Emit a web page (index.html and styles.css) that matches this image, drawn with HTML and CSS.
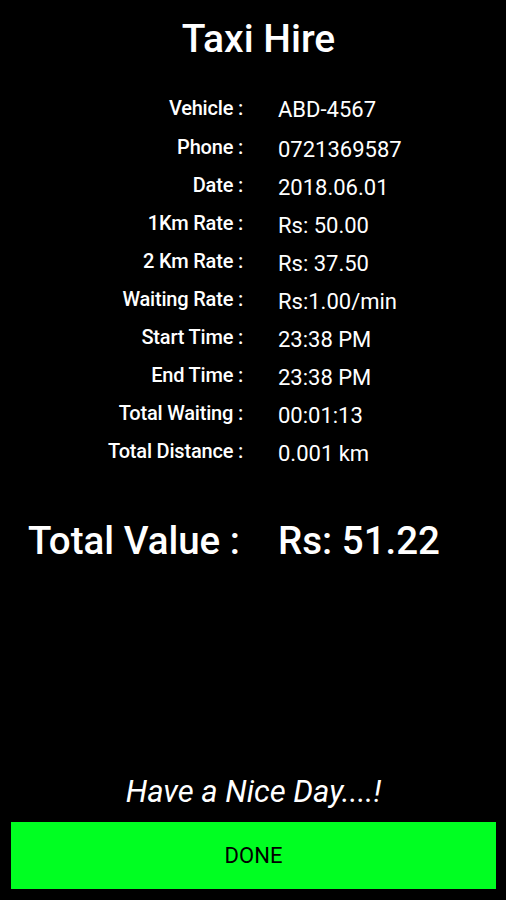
FILE: index.html
```html
<!DOCTYPE html>
<html lang="en">
<head>
<meta charset="UTF-8">
<title>Taxi Hire</title>
<link rel="stylesheet" href="styles.css">
</head>
<body>
<div class="screen">
    <h1 class="titulo">Taxi Hire</h1>

    <div class="detalles">
        <div class="fila"><span class="etiqueta">Vehicle :</span><span class="valor">ABD-4567</span></div>
        <div class="fila"><span class="etiqueta">Phone :</span><span class="valor">0721369587</span></div>
        <div class="fila"><span class="etiqueta">Date :</span><span class="valor">2018.06.01</span></div>
        <div class="fila"><span class="etiqueta">1Km Rate :</span><span class="valor">Rs: 50.00</span></div>
        <div class="fila"><span class="etiqueta">2 Km Rate :</span><span class="valor">Rs: 37.50</span></div>
        <div class="fila"><span class="etiqueta">Waiting Rate :</span><span class="valor">Rs:1.00/min</span></div>
        <div class="fila"><span class="etiqueta">Start Time :</span><span class="valor">23:38 PM</span></div>
        <div class="fila"><span class="etiqueta">End Time :</span><span class="valor">23:38 PM</span></div>
        <div class="fila"><span class="etiqueta">Total Waiting :</span><span class="valor">00:01:13</span></div>
        <div class="fila"><span class="etiqueta">Total Distance :</span><span class="valor">0.001 km</span></div>
    </div>

    <div class="total">
        <span class="total-etiqueta">Total Value :</span>
        <span class="total-valor">Rs: 51.22</span>
    </div>

    <p class="saludo">Have a Nice Day....!</p>
    <button class="boton">DONE</button>
</div>
</body>
</html>
```

FILE: styles.css
```css
body {
    margin: 0;
    padding: 0;
    background-color: #000;
    color: #fff;
    font-family: Roboto, 'Noto Sans', sans-serif;
}

.screen {
    height: 900px;
    display: flex;
    flex-direction: column;
    box-sizing: border-box;
    padding: 0 10px 11px 11px;
}

.titulo {
    margin: 16px 0 0 0;
    padding-left: 10px;
    text-align: center;
    font-size: 39px;
    font-weight: 500;
    line-height: 46px;
}

.detalles {
    margin-top: 27px;
    display: flex;
    flex-direction: column;
}

.fila {
    display: grid;
    grid-template-columns: 232px 1fr;
    column-gap: 35px;
    align-items: center;
    height: 38px;
}

.fila:first-child {
    height: 41px;
}

.etiqueta {
    text-align: right;
    font-size: 20px;
    font-weight: 500;
    letter-spacing: -0.2px;
    margin-top: -4px;
}

.valor {
    font-size: 22px;
}

.total {
    margin-top: 46px;
    display: grid;
    grid-template-columns: 232px 1fr;
    column-gap: 35px;
    align-items: center;
}

.total-etiqueta {
    padding-left: 17px;
    font-size: 38.5px;
    font-weight: 500;
    white-space: nowrap;
}

.total-valor {
    font-size: 38.5px;
    font-weight: 500;
}

.saludo {
    margin: auto 0 0 0;
    text-align: center;
    font-size: 31px;
    font-style: italic;
    line-height: 36px;
    padding-bottom: 12px;
}

.boton {
    width: 100%;
    height: 67px;
    background-color: #00ff22;
    color: #000;
    border: none;
    font-family: Roboto, sans-serif;
    font-size: 22px;
    padding: 0;
}
```
